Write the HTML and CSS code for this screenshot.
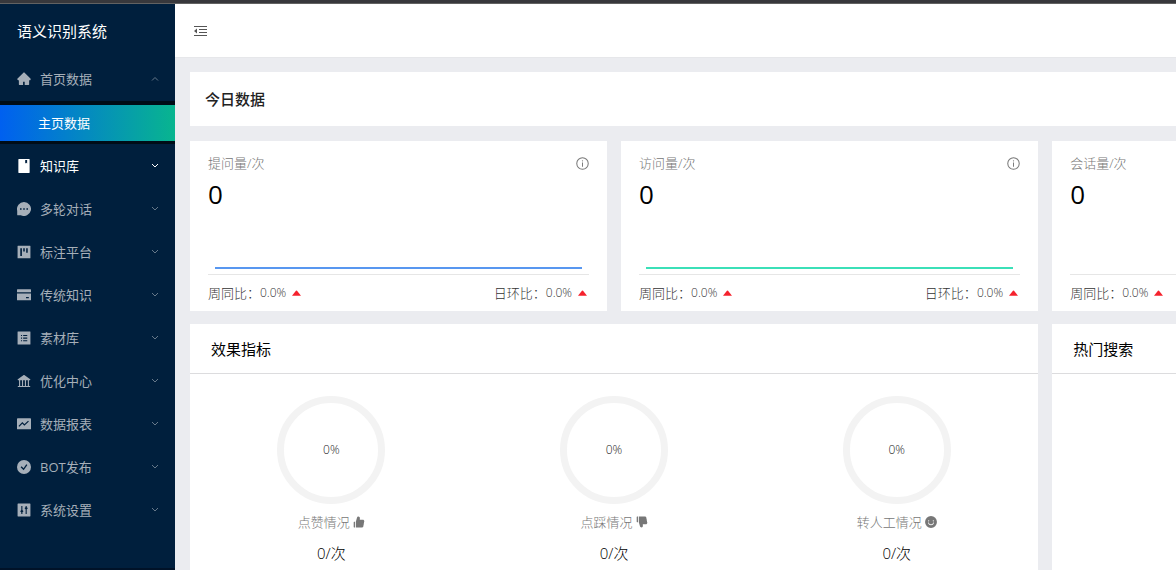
FILE: index.html
```html
<!DOCTYPE html>
<html lang="zh-CN">
<head>
<meta charset="utf-8">
<title>语义识别系统</title>
<link rel="stylesheet" href="styles.css">
</head>
<body>
<svg class="sprite" aria-hidden="true">
  <symbol id="down" viewBox="0 0 8 6"><path d="M1 1l3 3 3-3" fill="none" stroke="currentColor" stroke-width="1"/></symbol>
  <symbol id="up" viewBox="0 0 8 6"><path d="M1 4.500l3-3 3 3" fill="none" stroke="currentColor" stroke-width="1"/></symbol>
  <symbol id="caret" viewBox="0 0 10 6"><path d="M0 6L4.400.4q.6-.6 1.200 0L10 6z"/></symbol>
  <symbol id="info" viewBox="0 0 1024 1024"><path d="M512 20a492 492 0 1 0 0 984 492 492 0 0 0 0-984zm0 904a412 412 0 1 1 0-824 412 412 0 0 1 0 824z"/><path d="M462 300a50 50 0 10100 0 50 50 0 10-100 0zm12 130h76v330h-76z"/></symbol>
</svg>
<div class="strip"></div>
<div class="app">
  <aside class="sidebar">
    <h1 class="brand">语义识别系统</h1>
    <nav class="menu">
      <button class="item home" type="button" aria-expanded="true">
        <svg class="icon" viewBox="40 60 944 944"><path d="M946.500 505L534.600 93.400a31.930 31.930 0 00-45.200 0L77.500 505c-12 12-18.800 28.300-18.800 45.300 0 35.300 28.700 64 64 64h43.400V908c0 17.700 14.300 32 32 32H448V716h112v224h265.900c17.700 0 32-14.300 32-32V614.300h43.400c17 0 33.300-6.700 45.300-18.800 24.900-25 24.900-65.500-.1-90.500z"/></svg>
        <span class="name">首页数据</span><svg class="arrow"><use href="#up"/></svg>
      </button>
      <div class="submenu"><a class="current" href="#home">主页数据</a></div>
      <button class="item active" type="button">
        <svg class="icon" viewBox="0 0 1024 1024"><path d="M892 0H132c-18 0-32 14-32 32v960c0 18 14 32 32 32h760c18 0 32-14 32-32V32c0-18-14-32-32-32zM740 330L670 280 600 330V70h140z"/></svg>
        <span class="name">知识库</span><svg class="arrow"><use href="#down"/></svg>
      </button>
      <button class="item" type="button">
        <svg class="icon" viewBox="0 0 1024 1024"><path fill-rule="evenodd" d="M512 0A512 512 0 1 1 285 971H60q-45 0-45-45V640A512 512 0 0 1 512 0zM220 455v114h114V455zm235 0v114h114V455zm235 0v114h114V455z"/></svg>
        <span class="name">多轮对话</span><svg class="arrow"><use href="#down"/></svg>
      </button>
      <button class="item" type="button">
        <svg class="icon" viewBox="0 0 1024 1024"><path fill-rule="evenodd" d="M72 50h880q30 0 30 30v864q0 30-30 30H72q-30 0-30-30V80q0-30 30-30zM240 240v560h120V240zm215 0v230h115V240zm215 0v320h115V240z"/></svg>
        <span class="name">标注平台</span><svg class="arrow"><use href="#down"/></svg>
      </button>
      <button class="item" type="button">
        <svg class="icon" viewBox="0 0 1024 1024"><path fill-rule="evenodd" d="M30 95h964q30 0 30 30v180H0V125q0-30 30-30zM0 405h1024v470q0 30-30 30H30q-30 0-30-30zM660 650v100h205V650z"/></svg>
        <span class="name">传统知识</span><svg class="arrow"><use href="#down"/></svg>
      </button>
      <button class="item" type="button">
        <svg class="icon" viewBox="0 0 1024 1024"><path fill-rule="evenodd" d="M72 30h880q30 0 30 30v904q0 30-30 30H72q-30 0-30-30V60q0-30 30-30zM290 290v80h80v-80zm160 0v80h300v-80zM290 480v80h80v-80zm160 0v80h300v-80zM290 670v80h80v-80zm160 0v80h300v-80z"/></svg>
        <span class="name">素材库</span><svg class="arrow"><use href="#down"/></svg>
      </button>
      <button class="item" type="button">
        <svg class="icon" viewBox="60 60 904 904"><path d="M894 462c30.900 0 43.800-39.700 18.700-58L530.800 126.200a31.810 31.810 0 00-37.600 0L111.300 404c-25.100 18.200-12.200 58 18.800 58H192v374h-72c-4.400 0-8 3.600-8 8v52c0 4.400 3.600 8 8 8h784c4.400 0 8-3.600 8-8v-52c0-4.400-3.600-8-8-8h-72V462h62zM381 836H264V462h117v374zm189 0H453V462h117v374zm190 0H642V462h118v374z"/></svg>
        <span class="name">优化中心</span><svg class="arrow"><use href="#down"/></svg>
      </button>
      <button class="item" type="button">
        <svg class="icon" viewBox="0 0 1024 1024"><path d="M30 95h964q30 0 30 30v750q0 30-30 30H30q-30 0-30-30V125q0-30 30-30z"/><path class="cut" d="M140 690l250-260 150 150 300-280" stroke-width="90"/></svg>
        <span class="name">数据报表</span><svg class="arrow"><use href="#down"/></svg>
      </button>
      <button class="item" type="button">
        <svg class="icon" viewBox="0 0 1024 1024"><circle cx="512" cy="512" r="512"/><path class="cut" d="M300 490l180 190 240-340" stroke-width="100"/></svg>
        <span class="name">BOT发布</span><svg class="arrow"><use href="#down"/></svg>
      </button>
      <button class="item" type="button">
        <svg class="icon" viewBox="0 0 1024 1024"><path d="M72 42h880q30 0 30 30v880q0 30-30 30H72q-30 0-30-30V72q0-30 30-30z"/><path class="cut" d="M355 220v580M670 220v580M255 600h200M570 380h200" stroke-width="80"/><circle class="cut" cx="355" cy="600" r="55" stroke-width="60"/><circle class="cut" cx="670" cy="380" r="55" stroke-width="60"/></svg>
        <span class="name">系统设置</span><svg class="arrow"><use href="#down"/></svg>
      </button>
    </nav>
    <div class="trigger"></div>
  </aside>
  <div class="page">
    <header class="topbar">
      <button class="fold" type="button" aria-label="收起菜单"><svg viewBox="0 0 13 12"><path d="M0 1h13v1H0zM5 4h8v1H5zM5 7h8v1H5zM0 10h13v1H0zM3 3.500v5L0 6z"/></svg></button>
    </header>
    <main class="content">
      <section class="panel heading"><h2>今日数据</h2></section>
      <div class="columns">
        <section class="panel stat">
          <div class="stat-top"><span>提问量/次</span><svg class="info"><use href="#info"/></svg></div>
          <div class="number">0</div>
          <div class="chart blue"></div>
          <div class="compare"><span class="rate"><span>周同比：</span><span class="value">0.0%</span><svg><use href="#caret"/></svg></span><span class="rate"><span>日环比：</span><span class="value">0.0%</span><svg><use href="#caret"/></svg></span></div>
        </section>
        <section class="panel stat">
          <div class="stat-top"><span>访问量/次</span><svg class="info"><use href="#info"/></svg></div>
          <div class="number">0</div>
          <div class="chart green"></div>
          <div class="compare"><span class="rate"><span>周同比：</span><span class="value">0.0%</span><svg><use href="#caret"/></svg></span><span class="rate"><span>日环比：</span><span class="value">0.0%</span><svg><use href="#caret"/></svg></span></div>
        </section>
        <section class="panel stat bleed">
          <div class="stat-top"><span>会话量/次</span></div>
          <div class="number">0</div>
          <div class="chart"></div>
          <div class="compare"><span class="rate"><span>周同比：</span><span class="value">0.0%</span><svg><use href="#caret"/></svg></span></div>
        </section>
      </div>
      <div class="columns lower">
        <section class="panel effect">
          <h3>效果指标</h3>
          <div class="gauges">
            <div class="gauge"><div class="ring">0%</div><div class="caption">点赞情况<svg viewBox="60 60 904 904"><path id="thumb" d="M885.900 533.700c16.800-22.200 26.100-49.400 26.100-77.700 0-44.900-25.100-87.400-65.500-111.100a67.670 67.670 0 00-34.300-9.300H572.400l6-122.900c1.400-29.700-9.100-57.900-29.500-79.400A106.620 106.620 0 00471 99.900c-52 0-98 35-111.800 85.100l-85.900 311h-.3v428h472.300c9.200 0 18.200-1.800 26.500-5.400 47.600-20.300 78.300-66.800 78.300-118.400 0-12.600-1.800-25-5.400-37 16.800-22.200 26.100-49.400 26.100-77.700 0-12.600-1.800-25-5.400-37 16.800-22.200 26.100-49.400 26.100-77.700-.2-12.600-2-25.100-5.600-37.100zM112 528v364c0 17.700 14.300 32 32 32h65V496h-65c-17.700 0-32 14.300-32 32z"/></svg></div><div class="total">0/次</div></div>
            <div class="gauge"><div class="ring">0%</div><div class="caption">点踩情况<svg viewBox="60 60 904 904"><use href="#thumb" transform="translate(0 1024) scale(1 -1)"/></svg></div><div class="total">0/次</div></div>
            <div class="gauge"><div class="ring">0%</div><div class="caption">转人工情况<svg viewBox="60 60 904 904"><path fill-rule="evenodd" d="M512 64a448 448 0 1 0 0 896 448 448 0 0 0 0-896zM288 421a48 48 0 1 0 96 0 48 48 0 0 0-96 0zm352 0a48 48 0 1 0 96 0 48 48 0 0 0-96 0zM288 541h60c5 75 70 140 164 140s159-65 164-140h60c-5 115-105 212-224 212s-219-97-224-212z"/></svg></div><div class="total">0/次</div></div>
          </div>
        </section>
        <section class="panel search"><h3>热门搜索</h3></section>
      </div>
    </main>
  </div>
</div>
</body>
</html>
```
FILE: styles.css
```css
* { box-sizing: border-box; }

body {
  margin: 0;
  height: 100vh;
  overflow: hidden;
  display: flex;
  flex-direction: column;
  background: #ebecf0;
  color: #000;
  font: 300 13px/20px "Open Sans", "Noto Sans CJK SC", sans-serif;
}

h1, h2, h3 { margin: 0; font-size: 15px; line-height: 24px; font-weight: 400; }
button { border: 0; padding: 0; background: none; font: inherit; color: inherit; text-align: left; cursor: pointer; }
svg { fill: currentColor; flex: none; }
.sprite { position: absolute; width: 0; height: 0; }

.strip { flex: none; height: 4px; background: #38383c; border-bottom: 1px solid #626262; }
.app { flex: 1; min-height: 0; display: flex; }

.sidebar {
  flex: none;
  width: 175px;
  display: flex;
  flex-direction: column;
  background: #001f3d;
  color: #a6afb9;
}
.brand { padding: 15px 17px 14px; color: #fff; }
.menu { flex: 1; display: flex; flex-direction: column; font-weight: 400; }
.item { flex: none; height: 43px; padding: 0 16px 0 17px; display: flex; align-items: center; }
.icon { width: 14px; height: 14px; margin-right: 9px; }
.cut { fill: none; stroke: #001f3d; }
.name { flex: 1; }
.arrow { width: 8px; height: 6px; color: #66788a; }
.active, .active .arrow { color: #fff; }
.submenu { margin-top: 1px; padding: 4px 0 3px; background: #000c17; }
.current {
  display: block;
  padding: 8px 38px;
  color: #fff;
  text-decoration: none;
  background: linear-gradient(90deg, #0060f0, #08b58f);
}
.trigger { flex: none; height: 2px; background: #001228; }

.page { flex: 1; min-width: 0; display: flex; flex-direction: column; }
.topbar { flex: none; height: 54px; padding: 0 19px; display: flex; align-items: center; background: #fff; border-bottom: 1px solid #e6e7ea; }
.fold { display: flex; color: #555; }
.fold svg { width: 13px; height: 12px; }

.content { flex: 1; min-height: 0; padding: 14px 0 0 15px; display: flex; flex-direction: column; }
.panel { background: #fff; }
.heading { flex: none; padding: 15px; margin-bottom: 15px; }
.heading h2 { font-weight: 500; color: #222; }

.columns { display: grid; grid-template-columns: 42.3% 42.3% 1fr; column-gap: 14px; }
.stat { padding: 12px 18px 8px; color: #333; }
.bleed { padding-right: 0; }
.stat-top { display: flex; justify-content: space-between; align-items: center; color: #777; }
.info { width: 13px; height: 13px; }
.number { margin-top: 3px; font-size: 26px; line-height: 36px; font-weight: 400; color: #000; }
.chart { height: 57px; margin: 0 7px 5px; }
.blue { border-bottom: 2px solid #5897f0; }
.green { border-bottom: 2px solid #3be0b8; }
.compare { padding-top: 8px; display: flex; justify-content: space-between; border-top: 1px solid #e6e6e6; }
.rate { display: flex; align-items: center; }
.value { font-size: 12px; }
.rate svg { width: 9px; height: 6px; margin: 0 2px 0 6px; color: #f5222d; }

.lower { flex: 1; min-height: 0; margin-top: 13px; }
.effect { grid-column: span 2; }
.lower h3 { padding: 13px 21px 12px; border-bottom: 1px solid #dcdcde; }
.gauges { display: grid; grid-template-columns: repeat(3, 1fr); padding-top: 22px; }
.gauge { display: flex; flex-direction: column; align-items: center; }
.ring {
  width: 108px;
  height: 108px;
  display: flex;
  align-items: center;
  justify-content: center;
  border: 7px solid #f3f3f3;
  border-radius: 50%;
  color: #222;
  font-size: 12px;
}
.caption { margin-top: 8px; display: flex; align-items: center; color: #777; }
.caption svg { width: 12px; height: 12px; margin-left: 3px; }
.total { margin-top: 9px; font-size: 15px; line-height: 24px; color: #000; }
```
